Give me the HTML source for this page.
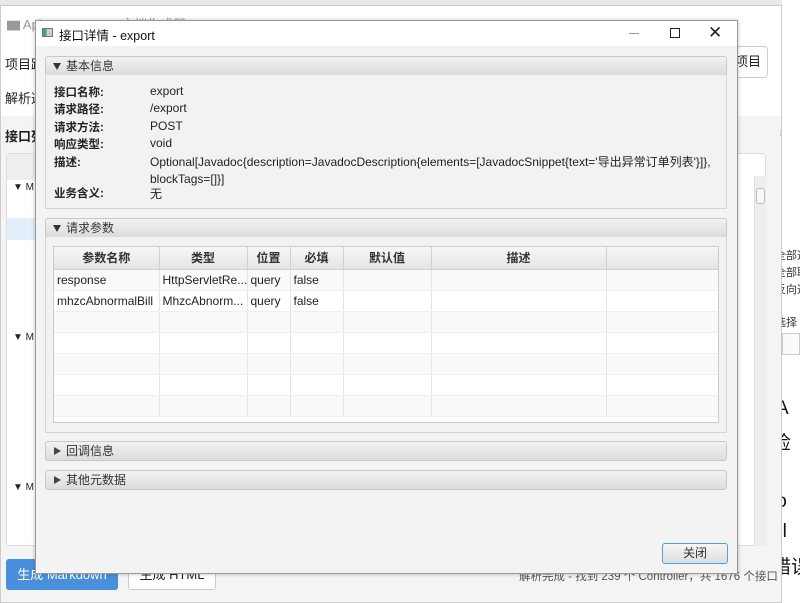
<!DOCTYPE html>
<html><head><meta charset="utf-8"><style>
*{box-sizing:border-box;margin:0;padding:0}
body{width:800px;height:603px;overflow:hidden;background:#e9e9e9;font-family:"Liberation Sans","Noto Sans CJK SC",sans-serif;font-size:12px;color:#222;position:relative}
.abs{position:absolute;white-space:nowrap}
.hdr{position:absolute;left:45px;width:682px;height:20px;border:1px solid #c8c8c8;border-radius:3px;background:linear-gradient(#f2f2f2,#dcdcdc);font-size:12px;color:#333;line-height:18px;padding-left:20px}
.tri{position:absolute;left:7px;top:6px;width:0;height:0;border-left:4px solid transparent;border-right:4px solid transparent;border-top:7px solid #333}
.trir{position:absolute;left:8px;top:5px;width:0;height:0;border-top:4px solid transparent;border-bottom:4px solid transparent;border-left:7px solid #444}
.lbl{position:absolute;left:54px;font-weight:bold;font-size:11.5px}
.val{position:absolute;left:150px;font-size:12px}
table{border-collapse:collapse;table-layout:fixed}
td,th{height:21px;border-right:1px solid #e4e4e4;padding:0 3px;white-space:nowrap;overflow:hidden;font-size:12px}
th{background:linear-gradient(#f7f7f7,#e4e4e4);font-weight:bold;border-right:1px solid #d0d0d0;border-bottom:1px solid #d0d0d0;height:22px;color:#333}
tr:nth-child(even) td{background:#f9f9f9}
tr td{border-bottom:1px solid #efefef}
</style></head><body>
<div class="abs" style="left:782px;top:0;width:18px;height:603px;background:#fff"></div>
<div class="abs" style="left:768px;top:366px;font-size:19px;color:#111">ff</div>
<div class="abs" style="left:776px;top:398px;font-size:19px;color:#111">A</div>
<div class="abs" style="left:772px;top:428px;font-size:19px;color:#111">检</div>
<div class="abs" style="left:772px;top:491px;font-size:19px;color:#111">io</div>
<div class="abs" style="left:772px;top:521px;font-size:19px;color:#111">el</div>
<div class="abs" style="left:772px;top:552px;font-size:19px;color:#111">错误</div>
<div class="abs" style="left:775px;top:248px;font-size:11px;line-height:17px;color:#333">全部选<br>全部取<br>反向选</div>
<div class="abs" style="left:775px;top:314px;font-size:11px;color:#333">选择</div>
<div class="abs" style="left:782px;top:333px;width:18px;height:22px;border:1px solid #ccc;background:#fafafa"></div>
<div class="abs" style="left:0;top:5px;width:782px;height:598px;background:#f4f4f4;border:1px solid #ccc;overflow:hidden">
 <div class="abs" style="left:0;top:0;width:780px;height:35px;background:#fff"></div>
 <div class="abs" style="left:6px;top:8px;color:#999;font-size:13px">▆ ApiDocGen - API文档生成器</div>
 <div class="abs" style="left:0;top:35px;width:780px;height:75px;background:#fff"></div>
 <div class="abs" style="left:4px;top:48px;font-size:13px">项目路</div>
 <div class="abs" style="left:4px;top:82px;font-size:13px">解析选</div>
 <div class="abs" style="left:4px;top:120px;font-size:13px;font-weight:bold">接口列</div>
 <div class="abs" style="left:725px;top:40px;width:42px;height:32px;border:1px solid #ccc;border-radius:4px;background:#fff;line-height:30px;padding-left:8px;font-size:13px">项目</div>
 <div class="abs" style="left:779px;top:122px;font-size:11px;color:#888">800</div>
 <div class="abs" style="left:5px;top:147px;width:760px;height:393px;background:#fff;border:1px solid #ddd;border-radius:4px"></div>
 <div class="abs" style="left:6px;top:148px;width:40px;height:26px;background:#eee"></div>
 <div class="abs" style="left:6px;top:212px;width:40px;height:22px;background:#e3effa"></div>
 <div class="abs" style="left:12px;top:176px;font-size:10px">▼ M</div>
 <div class="abs" style="left:12px;top:326px;font-size:10px">▼ M</div>
 <div class="abs" style="left:12px;top:476px;font-size:10px">▼ M</div>
 <div class="abs" style="left:753px;top:170px;width:12px;height:370px;background:#eee;border-left:1px solid #ddd"></div>
 <div class="abs" style="left:755px;top:182px;width:9px;height:16px;background:#f8f8f8;border:1px solid #bbb;border-radius:3px"></div>
 <div class="abs" style="left:5px;top:553px;width:112px;height:31px;background:#4a8fdb;border-radius:3px;color:#fff;font-size:13px;line-height:31px;text-align:center">生成 Markdown</div>
 <div class="abs" style="left:127px;top:553px;width:88px;height:31px;background:#fff;border:1px solid #ccc;border-radius:3px;font-size:13px;line-height:29px;text-align:center">生成 HTML</div>
 <div class="abs" style="left:518px;top:562px;font-size:11.5px;color:#555">解析完成 - 找到 239 个 Controller，共 1676 个接口</div>
</div>
<div class="abs" style="left:35px;top:20px;width:703px;height:554px;background:#f3f3f3;border:1px solid #999;box-shadow:0 0 4px rgba(0,0,0,.25)">
 <div class="abs" style="left:0;top:0;width:701px;height:25px;background:#fff"></div>
 <div class="abs" style="left:6px;top:7px;width:11px;height:9px;border:1px solid #777;background:linear-gradient(90deg,#3a7 0 40%,#ccc 40%)"></div>
 <div class="abs" style="left:23px;top:4px;font-size:12.5px;color:#111">接口详情 - export</div>
 <div class="abs" style="left:593px;top:12px;width:10px;height:1px;background:#999"></div>
 <div class="abs" style="left:634px;top:7px;width:10px;height:10px;border:1.3px solid #222"></div>
 <div class="abs" style="left:672px;top:2px;font-size:17px;color:#222">✕</div>
</div>
<div class="hdr" style="top:56px"><span class="tri"></span>基本信息</div>
<div class="abs" style="left:45px;top:75px;width:682px;height:134px;border:1px solid #d4d4d4;border-top:none;background:#f2f2f2"></div>
<div class="lbl" style="top:84px">接口名称:</div><div class="val" style="top:84px">export</div>
<div class="lbl" style="top:101px">请求路径:</div><div class="val" style="top:101px">/export</div>
<div class="lbl" style="top:119px">请求方法:</div><div class="val" style="top:119px">POST</div>
<div class="lbl" style="top:136px">响应类型:</div><div class="val" style="top:136px">void</div>
<div class="lbl" style="top:154px">描述:</div><div class="val" style="top:154px;line-height:17px">Optional[Javadoc{description=JavadocDescription{elements=[JavadocSnippet{text='导出异常订单列表'}]},<br>blockTags=[]}]</div>
<div class="lbl" style="top:185px">业务含义:</div><div class="val" style="top:185px">无</div>
<div class="hdr" style="top:218px"><span class="tri"></span>请求参数</div>
<div class="abs" style="left:45px;top:237px;width:682px;height:196px;border:1px solid #d4d4d4;border-top:none;background:#f2f2f2"></div>
<div class="abs" style="left:53px;top:246px;width:666px;height:177px;border:1px solid #ccc;background:#fff;overflow:hidden">
<table style="width:664px">
<colgroup><col style="width:105px"><col style="width:88px"><col style="width:43px"><col style="width:53px"><col style="width:88px"><col style="width:175px"><col style="width:112px"></colgroup>
<tr><th>参数名称</th><th>类型</th><th>位置</th><th>必填</th><th>默认值</th><th>描述</th><th></th></tr>
<tr><td>response</td><td>HttpServletRe...</td><td>query</td><td>false</td><td></td><td></td><td></td></tr>
<tr><td>mhzcAbnormalBill</td><td>MhzcAbnorm...</td><td>query</td><td>false</td><td></td><td></td><td></td></tr>
<tr><td></td><td></td><td></td><td></td><td></td><td></td><td></td></tr>
<tr><td></td><td></td><td></td><td></td><td></td><td></td><td></td></tr>
<tr><td></td><td></td><td></td><td></td><td></td><td></td><td></td></tr>
<tr><td></td><td></td><td></td><td></td><td></td><td></td><td></td></tr>
<tr><td></td><td></td><td></td><td></td><td></td><td></td><td></td></tr>
</table></div>
<div class="hdr" style="top:441px"><span class="trir"></span>回调信息</div>
<div class="hdr" style="top:470px"><span class="trir"></span>其他元数据</div>
<div class="abs" style="left:662px;top:543px;width:66px;height:21px;border:1.5px solid #4aa3e0;border-radius:3px;background:linear-gradient(#f6f6f6,#dedede);text-align:center;line-height:18px;font-size:12px;color:#333">关闭</div>
</body></html>
